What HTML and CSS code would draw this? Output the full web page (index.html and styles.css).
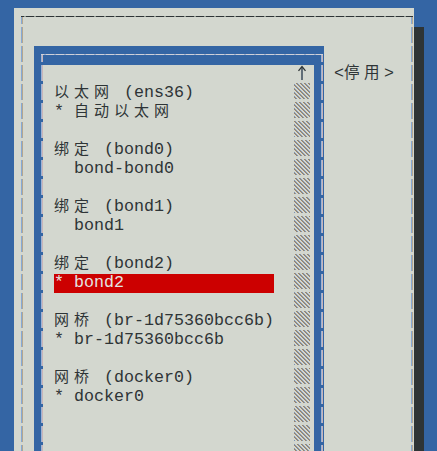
FILE: index.html
```html
<!DOCTYPE html>
<html lang="zh-CN">
<head>
<meta charset="utf-8">
<title>nmtui</title>
<link rel="stylesheet" href="styles.css">
</head>
<body>
<div class="window">
  <div class="frame">
    <div class="listbox">
      <div class="lb-frame">
        <div class="lb-body">
          <div class="lb-gray">
            <div class="items">
              <div class="row"></div>
              <div class="row"><span class="cjk">以太网</span> (ens36)</div>
              <div class="row">* <span class="cjk">自动以太网</span></div>
              <div class="row"></div>
              <div class="row"><span class="cjk">绑定</span> (bond0)</div>
              <div class="row">  bond-bond0</div>
              <div class="row"></div>
              <div class="row"><span class="cjk">绑定</span> (bond1)</div>
              <div class="row">  bond1</div>
              <div class="row"></div>
              <div class="row"><span class="cjk">绑定</span> (bond2)</div>
              <div class="row selected">* bond2</div>
              <div class="row"></div>
              <div class="row"><span class="cjk">网桥</span> (br-1d75360bcc6b)</div>
              <div class="row">* br-1d75360bcc6b</div>
              <div class="row"></div>
              <div class="row"><span class="cjk">网桥</span> (docker0)</div>
              <div class="row">* docker0</div>
              <div class="row"></div>
              <div class="row"></div>
            </div>
            <div class="scrollbar">
              <div class="sb-arrow">
                <svg width="16" height="18" viewBox="0 0 16 18"><path d="M8 2V15" stroke="#3a4a5a" stroke-width="1.5" fill="none"/><path d="M4.5 5.8L8 1.6L11.5 5.8" stroke="#2e3436" stroke-width="1.3" fill="none"/></svg>
              </div>
              <div class="sb-track"></div>
            </div>
          </div>
        </div>
      </div>
    </div>
    <div class="buttons">&lt;<span class="cjk btn-cjk">停用</span>&gt;</div>
  </div>
</div>
</body>
</html>
```
FILE: styles.css
```css
html, body {
  margin: 0;
}
body {
  width: 437px;
  height: 451px;
  overflow: hidden;
  background: #3465a4;
  display: flex;
  align-items: flex-start;
  padding: 8px 0 0 14px;
  box-sizing: border-box;
  font-family: "Liberation Mono", "Noto Sans CJK SC", monospace;
  font-size: 16.66px;
  color: #2e3436;
}
.window {
  flex: none;
  width: 400px;
  height: 443px;
  overflow: hidden;
  background: #d3d7cf;
  box-shadow: 10px 19px 0 #2e3436;
  padding: 8px 1px 0 7px;
  box-sizing: border-box;
  display: flex;
}
.frame {
  flex: none;
  width: 392px;
  padding: 1px 2px 0;
  box-sizing: border-box;
  display: flex;
  align-items: flex-start;
  background:
    linear-gradient(to right, #8e9890 0 2px, #2e3436 2px) 3px 0 / 10px 1px repeat-x,
    linear-gradient(#d3d7cf 0 3px, transparent 3px) 0 8px / 2px 19px repeat-y,
    linear-gradient(#d3d7cf 0 3px, transparent 3px) 100% 8px / 2px 19px repeat-y,
    linear-gradient(to right, #86a9d6 0 1px, #b4a68e 1px) 0 0 / 2px 100% no-repeat,
    linear-gradient(to right, #86a9d6 0 1px, #b4a68e 1px) 100% 0 / 2px 100% no-repeat;
}
.listbox {
  flex: none;
  margin: 29px 0 0 11px;
  width: 290px;
  height: 405px;
  background: #3465a4;
  padding: 8px 1px 0 7px;
  box-sizing: border-box;
  display: flex;
}
.lb-frame {
  flex: 1;
  padding: 1px 2px 0;
  display: flex;
  background:
    linear-gradient(to right, #9fb0cc 0 2px, #cfd0d8 2px) 3px 0 / 10px 1px repeat-x,
    linear-gradient(#3465a4 0 3px, transparent 3px) 0 8px / 2px 19px repeat-y,
    linear-gradient(#3465a4 0 3px, transparent 3px) 100% 8px / 2px 19px repeat-y,
    linear-gradient(to right, #9db4d6 0 1px, #c8b4b8 1px) 0 0 / 2px 100% no-repeat,
    linear-gradient(to right, #9db4d6 0 1px, #c8b4b8 1px) 100% 0 / 2px 100% no-repeat,
    #3465a4;
}
.lb-body {
  flex: 1;
  padding: 10px 7px 0 0;
  display: flex;
}
.lb-gray {
  flex: 1;
  background: #d3d7cf;
  padding: 0 4px 0 11px;
  display: flex;
  align-items: flex-start;
}
.items {
  width: 240px;
  flex: none;
}
.row {
  height: 19px;
  line-height: 18px;
  white-space: pre;
}
.row.selected {
  width: 220px;
  background: #cc0000;
  color: #e4e4e2;
}
.cjk {
  font-family: "Noto Sans CJK SC", sans-serif;
  font-size: 15px;
  letter-spacing: 5px;
  line-height: 0;
}
.scrollbar {
  width: 16px;
  flex: none;
}
.sb-arrow {
  height: 18px;
}
.sb-arrow svg {
  display: block;
}
.sb-track {
  height: 368px;
  background:
    linear-gradient(transparent 0 16px, #d3d7cf 16px) 0 0 / 16px 19px repeat-y,
    linear-gradient(45deg, #d3d7cf 0 18%, #a08461 18% 36%, #7c94b4 36% 46%, #d3d7cf 46% 68%, #a08461 68% 86%, #7c94b4 86% 96%, #d3d7cf 96%) 0 0 / 4px 4px repeat;
}
.buttons {
  flex: none;
  margin: 48px 0 0 10px;
  height: 19px;
  line-height: 18px;
  white-space: pre;
}
.btn-cjk {
  font-size: 15.5px;
  letter-spacing: 4.5px;
}
```
